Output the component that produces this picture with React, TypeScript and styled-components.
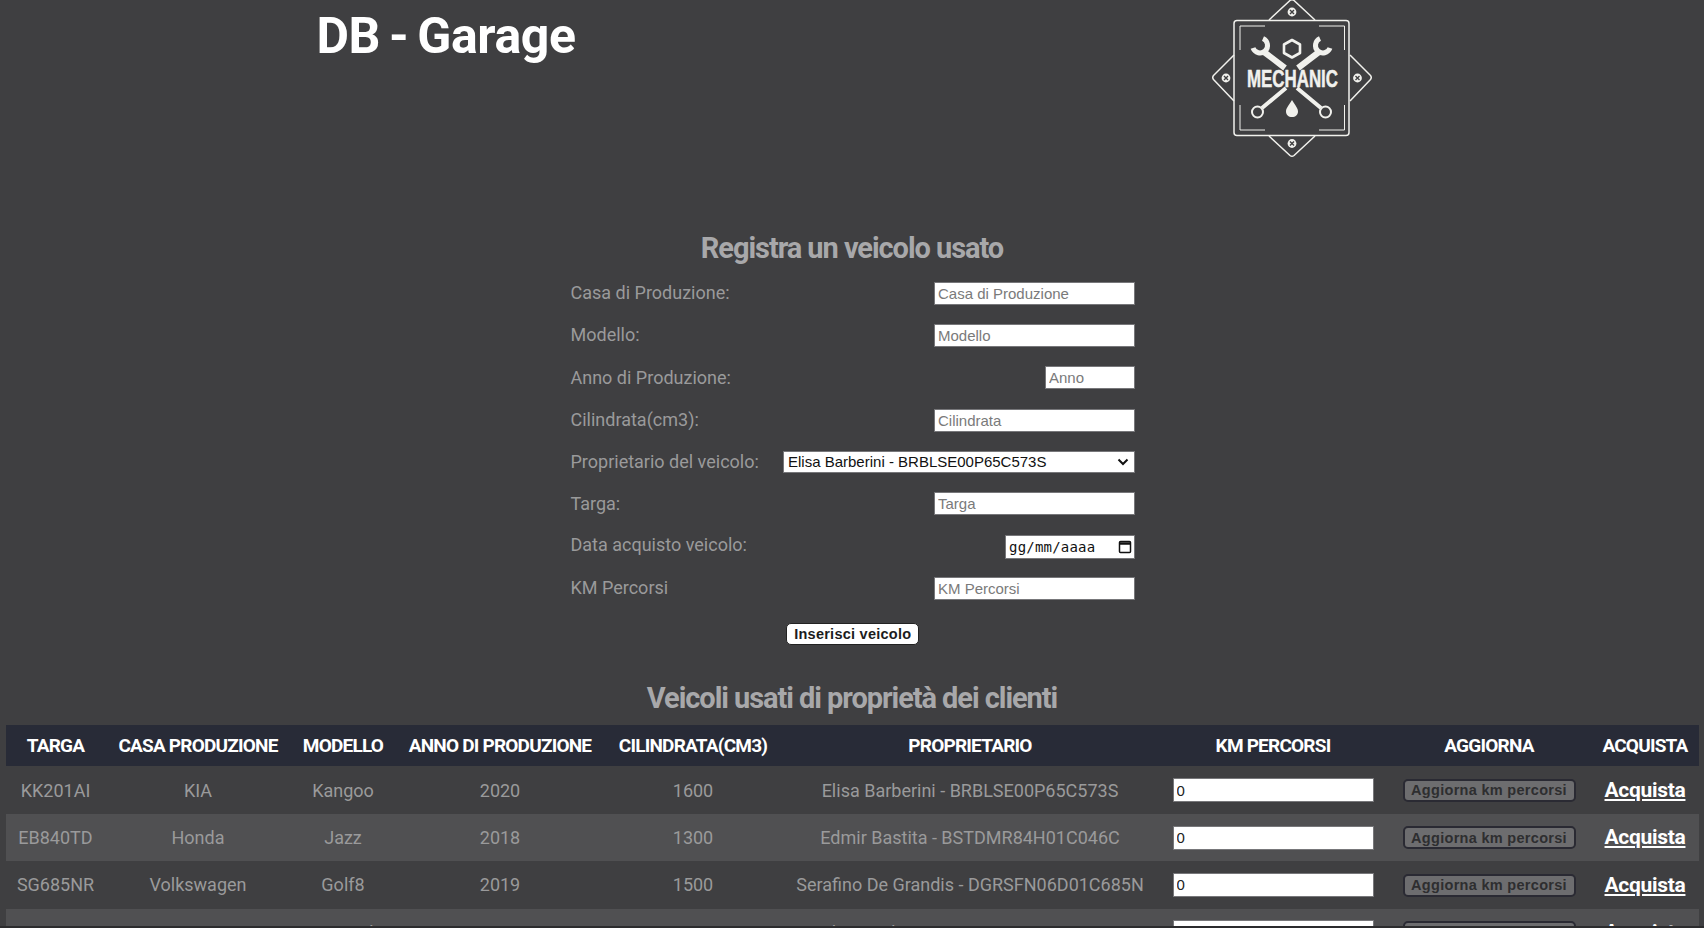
import React from 'react';
import styled, { createGlobalStyle } from 'styled-components';

const GlobalStyle = createGlobalStyle`
    html, body {
        margin: 0;
        height: 100%;
        overflow: hidden;
        background: #3f3f41;
        font-family: Roboto, "Liberation Sans", sans-serif;
    }
`;

const Page = styled.div`
    height: 928px;
    overflow: hidden;
`;

const Header = styled.header`
    display: grid;
    grid-template-columns: 892px 1fr;
    height: 222px;
`;

const Title = styled.h1`
    margin: 0;
    padding-top: 6px;
    text-align: center;
    font-size: 50px;
    line-height: 60px;
    font-weight: 700;
    letter-spacing: -0.4px;
    word-spacing: -3px;
    color: #fff;
`;

const LogoSlot = styled.div`
    padding-left: 288px;
`;

const SectionTitle = styled.h2`
    margin: 0;
    padding-top: 2px;
    text-align: center;
    font-size: 29px;
    line-height: 48px;
    font-weight: 700;
    letter-spacing: -1.06px;
    color: #a8a8aa;
`;

const Form = styled.form`
    width: 564.5px;
    margin-left: 570.5px;
`;

const Row = styled.div<{ $height?: number }>`
    display: flex;
    align-items: center;
    justify-content: space-between;
    height: ${(p) => p.$height ?? 42.3}px;
`;

const Label = styled.label`
    font-size: 18px;
    color: #9a9a9b;
    margin-top: -1px;
`;

const Field = styled.input<{ $width?: number }>`
    box-sizing: border-box;
    width: ${(p) => p.$width ?? 201}px;
    height: 23px;
    padding: 0 3px;
    border: 1px solid #77777a;
    border-radius: 0;
    background: #fff;
    font-family: "Liberation Sans", Arial, sans-serif;
    font-size: 15px;
    color: #111;

    &::placeholder {
        color: #7a7a7a;
    }
`;

const SelectWrap = styled.div`
    position: relative;
    display: flex;
`;

const OwnerSelect = styled.select`
    box-sizing: border-box;
    width: 352px;
    height: 22px;
    padding: 0 0 1px 4px;
    border: 1px solid #77777a;
    border-radius: 0;
    appearance: none;
    background: #fff;
    font-family: "Liberation Sans", Arial, sans-serif;
    font-size: 15px;
    color: #111;
`;

const Chevron = styled.svg`
    position: absolute;
    top: 7px;
    right: 6px;
    pointer-events: none;
`;

const DateBox = styled.div`
    box-sizing: border-box;
    display: flex;
    align-items: center;
    justify-content: space-between;
    width: 130px;
    height: 24px;
    margin-top: 4px;
    padding: 0 2px 0 3px;
    border: 1px solid #77777a;
    background: #fff;
    font-family: "DejaVu Sans Mono", "Liberation Mono", monospace;
    font-size: 14px;
    letter-spacing: 0.2px;
    color: #111;
`;

const SubmitRow = styled.div`
    display: flex;
    justify-content: center;
    padding: 13px 0 27px;
`;

const SubmitButton = styled.button`
    box-sizing: border-box;
    width: 133px;
    height: 22px;
    padding: 0;
    border: 1px solid #222;
    border-radius: 5px;
    background: #fff;
    font-family: "Liberation Sans", Arial, sans-serif;
    font-size: 14.5px;
    font-weight: 700;
    letter-spacing: 0.25px;
    color: #1c1c1c;
`;

const Table = styled.table`
    table-layout: fixed;
    width: 1693px;
    margin: 3px 0 0 6px;
    border-collapse: collapse;
`;

const HeadCell = styled.th<{ $width: number }>`
    width: ${(p) => p.$width}px;
    height: 41px;
    padding: 0;
    background: #282b37;
    font-size: 19px;
    font-weight: 700;
    letter-spacing: -0.79px;
    color: #fff;
    text-transform: uppercase;
`;

const BodyRow = styled.tr`
    height: 47.4px;

    &:nth-child(even) {
        background: #505052;
    }
`;

const Cell = styled.td`
    padding: 0;
    text-align: center;
    font-size: 18px;
    color: #9a9a9b;
`;

const KmInput = styled(Field)`
    width: 201px;
    height: 24px;
    color: #222;
    vertical-align: middle;
`;

const UpdateButton = styled.button`
    box-sizing: border-box;
    width: 173px;
    height: 23px;
    padding: 0;
    border: 2px solid #2a2a33;
    border-radius: 5px;
    background: #6d6d6f;
    font-family: "Liberation Sans", Arial, sans-serif;
    font-size: 14.5px;
    font-weight: 700;
    letter-spacing: 0.3px;
    color: #2e2e30;
    vertical-align: middle;
`;

const BuyLink = styled.a`
    font-size: 21px;
    font-weight: 700;
    letter-spacing: -0.3px;
    color: #fff;
    text-decoration: underline;
`;

const BottomEdge = styled.div`
    position: fixed;
    left: 0;
    right: 0;
    bottom: 0;
    height: 2px;
    background: #2c2c2e;
`;

const Screw: React.FC<{ x: number; y: number }> = ({ x, y }) => (
    <g transform={`translate(${x} ${y})`}>
        <circle r="4.4" fill="#f1f1ed" stroke="none" />
        <path d="M-2 -2L2 2M2 -2L-2 2" stroke="#3f3f41" strokeWidth="1.4" />
    </g>
);

const Logo: React.FC = () => (
    <svg width="220" height="180" viewBox="0 0 220 180" fill="none" stroke="#f1f1ed" strokeLinejoin="round">
        <rect x="54" y="20.500" width="115" height="115" rx="3" strokeWidth="1.500" />
        <path d="M60 50V26H85M139 26H164.500V50M60 105V130H85M139 130H164.500V105" strokeWidth="1" />
        <path d="M89 20L110 0.500Q112 -1 114 0.500L135 20M89 136L110 155.500Q112 157 114 155.500L135 136" strokeWidth="1.500" />
        <path d="M54 55L33.500 75.500Q32 77.500 33.500 79.500L54 101M170 55L190.500 75.500Q192 77.500 190.500 79.500L170 101" strokeWidth="1.500" />
        <Screw x={112} y={12} />
        <Screw x={112} y={143.500} />
        <Screw x={46} y={78} />
        <Screw x={177.500} y={78} />
        <path d="M112 40L120 44.500V53L112 57.500L104 53V44.500Z" strokeWidth="2.600" />
        <path d="M83 38.500A7.500 7.500 0 1 1 73 48" strokeWidth="5" />
        <path d="M140 38.500A7.500 7.500 0 1 0 150 48" strokeWidth="5" />
        <path d="M84 52L105 68M139 52L118 68" strokeWidth="6" />
        <path d="M106 88L82 108M117 88L141 108" strokeWidth="4" />
        <circle cx="77.500" cy="112" r="5.500" strokeWidth="2" fill="#3f3f41" />
        <circle cx="145.500" cy="112" r="5.500" strokeWidth="2" fill="#3f3f41" />
        <path d="M112 100C108.500 106 106 108 106 111.500C106 115 108.500 117 112 117C115.500 117 118 115 118 111.500C118 108 115.500 106 112 100Z" fill="#f1f1ed" stroke="none" />
        <text
            x="67"
            y="86.500"
            fill="#f1f1ed"
            stroke="#f1f1ed"
            strokeWidth="0.5"
            textLength="91"
            lengthAdjust="spacingAndGlyphs"
            fontFamily="'Liberation Sans Narrow', 'Liberation Sans', sans-serif"
            fontWeight="700"
            fontSize="23"
        >
            MECHANIC
        </text>
    </svg>
);

const CalendarIcon: React.FC = () => (
    <svg width="14" height="15" viewBox="0 0 14 15" fill="none" stroke="#111">
        <rect x="1.500" y="2.500" width="11" height="11" rx="1" strokeWidth="1.500" />
        <path d="M1.500 4.500H12.500" strokeWidth="2.500" />
    </svg>
);

const columns = [
    { name: 'Targa', width: 99 },
    { name: 'Casa Produzione', width: 186 },
    { name: 'Modello', width: 104 },
    { name: 'Anno di Produzione', width: 210 },
    { name: 'Cilindrata(cm3)', width: 176 },
    { name: 'Proprietario', width: 378 },
    { name: 'Km Percorsi', width: 228 },
    { name: 'Aggiorna', width: 204 },
    { name: 'Acquista', width: 108 },
];

const vehicles = [
    { plate: 'KK201AI', make: 'KIA', model: 'Kangoo', year: 2020, cc: 1600, owner: 'Elisa Barberini - BRBLSE00P65C573S' },
    { plate: 'EB840TD', make: 'Honda', model: 'Jazz', year: 2018, cc: 1300, owner: 'Edmir Bastita - BSTDMR84H01C046C' },
    { plate: 'SG685NR', make: 'Volkswagen', model: 'Golf8', year: 2019, cc: 1500, owner: 'Serafino De Grandis - DGRSFN06D01C685N' },
    { plate: 'FL302CK', make: 'Jeep', model: 'Renegade', year: 2017, cc: 1600, owner: 'Elisa Barberini - BRBLSE00P65C573S' },
];

const App: React.FC = () => (
    <Page>
        <GlobalStyle />
        <Header>
            <Title>DB - Garage</Title>
            <LogoSlot>
                <Logo />
            </LogoSlot>
        </Header>
        <SectionTitle>Registra un veicolo usato</SectionTitle>
        <Form onSubmit={(e) => e.preventDefault()}>
            <Row>
                <Label>Casa di Produzione:</Label>
                <Field placeholder="Casa di Produzione" />
            </Row>
            <Row>
                <Label>Modello:</Label>
                <Field placeholder="Modello" />
            </Row>
            <Row>
                <Label>Anno di Produzione:</Label>
                <Field $width={90} placeholder="Anno" />
            </Row>
            <Row>
                <Label>Cilindrata(cm3):</Label>
                <Field placeholder="Cilindrata" />
            </Row>
            <Row>
                <Label>Proprietario del veicolo:</Label>
                <SelectWrap>
                    <OwnerSelect>
                        <option>Elisa Barberini - BRBLSE00P65C573S</option>
                    </OwnerSelect>
                    <Chevron width="12" height="8" viewBox="0 0 12 8" fill="none" stroke="#111" strokeWidth="2">
                        <path d="M1.500 1.500L6 6L10.500 1.500" />
                    </Chevron>
                </SelectWrap>
            </Row>
            <Row $height={40.3}>
                <Label>Targa:</Label>
                <Field placeholder="Targa" />
            </Row>
            <Row>
                <Label>Data acquisto veicolo:</Label>
                <DateBox>
                    <span>gg/mm/aaaa</span>
                    <CalendarIcon />
                </DateBox>
            </Row>
            <Row $height={44.3}>
                <Label>KM Percorsi</Label>
                <Field placeholder="KM Percorsi" />
            </Row>
            <SubmitRow>
                <SubmitButton>Inserisci veicolo</SubmitButton>
            </SubmitRow>
        </Form>
        <SectionTitle>Veicoli usati di proprietà dei clienti</SectionTitle>
        <Table>
            <thead>
                <tr>
                    {columns.map(({ name, width }) => (
                        <HeadCell key={name} $width={width}>{name}</HeadCell>
                    ))}
                </tr>
            </thead>
            <tbody>
                {vehicles.map((v) => (
                    <BodyRow key={v.plate}>
                        <Cell>{v.plate}</Cell>
                        <Cell>{v.make}</Cell>
                        <Cell>{v.model}</Cell>
                        <Cell>{v.year}</Cell>
                        <Cell>{v.cc}</Cell>
                        <Cell>{v.owner}</Cell>
                        <Cell><KmInput type="number" defaultValue={0} /></Cell>
                        <Cell><UpdateButton disabled>Aggiorna km percorsi</UpdateButton></Cell>
                        <Cell><BuyLink href="#">Acquista</BuyLink></Cell>
                    </BodyRow>
                ))}
            </tbody>
        </Table>
        <BottomEdge />
    </Page>
);

export default App;
